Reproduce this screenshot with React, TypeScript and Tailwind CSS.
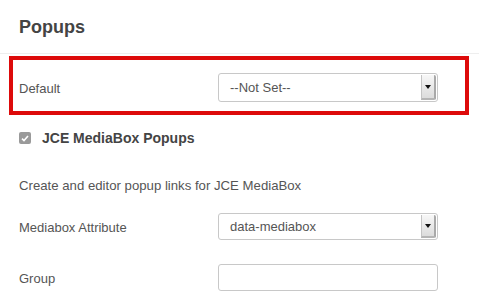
import React from "react";

function Arrow() {
  return (
    <div className="absolute right-[1px] top-[1px] bottom-[1px] w-[15px] flex items-center justify-center bg-gradient-to-b from-[#f7f7f7] to-[#dcdcdc] border-l border-[#c4c4c4] border-r-2 border-r-[#a9a9a9] border-b-2 border-b-[#b5b5b5] rounded-r-[2px]">
      <svg width="6" height="4" viewBox="0 0 6 4">
        <polygon points="0,0 6,0 3,4" fill="#111" />
      </svg>
    </div>
  );
}

function Select({ value, h }: { value: string; h: string }) {
  return (
    <div
      className={`relative w-[220px] ${h} border border-[#c8c8c8] rounded-[3px] bg-white flex items-center pl-[11px] text-[13px] text-[#555]`}
    >
      {value}
      <Arrow />
    </div>
  );
}

export default function App() {
  return (
    <div
      className="relative w-[479px] h-[307px] bg-white overflow-hidden text-[#555]"
      style={{ fontFamily: '"Liberation Sans", Arial, sans-serif' }}
    >
      <div className="h-[54px] border-b border-[#eeeeee] pl-[19px] pt-[17px]">
        <div className="text-[18px] leading-[20px] font-bold text-[#444]">Popups</div>
      </div>

      <div className="pl-[19px]">
        <div className="mt-[19px] flex items-center h-[29px]">
          <div className="w-[199px] text-[13px] pt-[2px]">Default</div>
          <Select value="--Not Set--" h="h-[29px]" />
        </div>

        <div className="mt-[26px] flex items-center h-[20px]">
          <div className="w-[12px] h-[12px] rounded-[2px] bg-[#9a9a9a] flex items-center justify-center">
            <svg width="8" height="7" viewBox="0 0 8 7">
              <polyline points="1,3.6 3,5.6 7,1" fill="none" stroke="#fff" strokeWidth="1.6" />
            </svg>
          </div>
          <div className="ml-[11px] text-[14px] font-bold text-[#444]">JCE MediaBox Popups</div>
        </div>

        <div className="mt-[28px] h-[20px] leading-[20px] text-[13.2px]">
          Create and editor popup links for JCE MediaBox
        </div>

        <div className="mt-[17px] flex items-center h-[27px]">
          <div className="w-[199px] text-[13px] pt-[2px]">Mediabox Attribute</div>
          <Select value="data-mediabox" h="h-[27px]" />
        </div>

        <div className="mt-[24px] flex items-center h-[27px]">
          <div className="w-[199px] text-[13px] pt-[2px]">Group</div>
          <div className="w-[220px] h-[27px] border border-[#c8c8c8] rounded-[3px] bg-white" />
        </div>
      </div>

      <div className="absolute left-[9px] top-[56px] w-[460px] h-[59px] border-4 border-[#dd0a0a]" />
    </div>
  );
}
